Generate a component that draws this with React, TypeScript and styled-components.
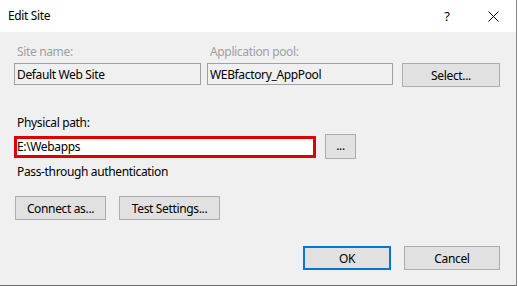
import React from "react";
import styled, { createGlobalStyle, css } from "styled-components";

const Global = createGlobalStyle`
  html, body { margin: 0; padding: 0; background: #ffffff; }
  body { font-family: "Noto Sans", "Liberation Sans", sans-serif; font-size: 12px; letter-spacing: -0.35px; color: #000; }
  * { box-sizing: border-box; }
`;

const Dialog = styled.div`
  width: 517px;
  height: 286px;
  display: flex;
  flex-direction: column;
  border-right: 1px solid #8a8a8a;
  border-bottom: 1px solid #6a6a6a;
  background: #f0f0f0;
`;

const TitleBar = styled.div`
  height: 32px;
  background: #ffffff;
  display: flex;
  align-items: center;
  padding-left: 8px;
  flex-shrink: 0;
`;

const Title = styled.div`
  flex: 1;
  font-size: 12px;
  line-height: 16px;
  padding-bottom: 1px;
`;

const CaptionButton = styled.div`
  width: 46px;
  height: 32px;
  display: flex;
  align-items: center;
  justify-content: center;
  font-size: 13px;
  color: #000;
`;

const Body = styled.div`
  flex: 1;
  padding: 12px 16px 0 14px;
  display: flex;
  flex-direction: column;
`;

const TopRow = styled.div`
  display: flex;
  align-items: flex-end;
`;

const Field = styled.div<{ $w: number; $mr: number }>`
  width: ${(p) => p.$w}px;
  margin-right: ${(p) => p.$mr}px;
  display: flex;
  flex-direction: column;
`;

const Label = styled.div<{ $disabled?: boolean; $indent?: number }>`
  line-height: 15px;
  height: 15px;
  padding-left: ${(p) => p.$indent ?? 3}px;
  color: ${(p) => (p.$disabled ? "#a0a0a0" : "#000")};
  white-space: nowrap;
`;

const TextBox = styled.div<{ $disabled?: boolean }>`
  height: 22px;
  margin-top: 4px;
  border: 1px solid ${(p) => (p.$disabled ? "#a0a0a0" : "#7a7a7a")};
  background: ${(p) => (p.$disabled ? "#f0f0f0" : "#fff")};
  display: flex;
  align-items: center;
  padding-left: 2px;
  white-space: nowrap;
`;

const Button = styled.div<{ $w: number; $default?: boolean }>`
  width: ${(p) => p.$w}px;
  height: 24px;
  background: #e1e1e1;
  border: 1px solid #adadad;
  display: flex;
  align-items: center;
  justify-content: center;
  white-space: nowrap;
  ${(p) =>
    p.$default &&
    css`
      border: 2px solid #0078d7;
    `}
`;

const SelectButton = styled(Button)`
  margin-bottom: -2px;
`;

const PathSection = styled.div`
  margin-top: 30px;
  display: flex;
  flex-direction: column;
`;

const PathRow = styled.div`
  display: flex;
  align-items: center;
  margin-top: 4px;
`;

const RedBox = styled.div`
  width: 302px;
  height: 22px;
  border: 3px solid #e00000;
  background: #fff;
  display: flex;
  align-items: center;
  padding-left: 0px;
  margin-right: 9px;
`;

const BrowseButton = styled(Button)`
  height: 25px;
  padding-bottom: 3px;
`;

const AuthLabel = styled(Label)`
  margin-top: 5px;
`;

const ActionRow = styled.div`
  display: flex;
  gap: 13px;
  margin-top: 17px;
  padding-left: 1px;
`;

const Footer = styled.div`
  display: flex;
  justify-content: flex-end;
  gap: 13px;
  margin-top: 26px;
`;

export default function App() {
  return (
    <>
      <Global />
      <Dialog>
        <TitleBar>
          <Title>Edit Site</Title>
          <CaptionButton>?</CaptionButton>
          <CaptionButton>
            <svg width="11" height="11" viewBox="0 0 11 11">
              <path d="M0.5 0.5 L10.5 10.5 M10.5 0.5 L0.5 10.5" stroke="#000" strokeWidth="1" fill="none" />
            </svg>
          </CaptionButton>
        </TitleBar>
        <Body>
          <TopRow>
            <Field $w={187} $mr={6}>
              <Label $disabled>Site name:</Label>
              <TextBox $disabled>Default Web Site</TextBox>
            </Field>
            <Field $w={186} $mr={9}>
              <Label $disabled>Application pool:</Label>
              <TextBox $disabled>WEBfactory_AppPool</TextBox>
            </Field>
            <SelectButton $w={98}>Select...</SelectButton>
          </TopRow>
          <PathSection>
            <Label>Physical path:</Label>
            <PathRow>
              <RedBox>E:\Webapps</RedBox>
              <BrowseButton $w={31}>...</BrowseButton>
            </PathRow>
            <AuthLabel>Pass-through authentication</AuthLabel>
          </PathSection>
          <ActionRow>
            <Button $w={91}>Connect as...</Button>
            <Button $w={101}>Test Settings...</Button>
          </ActionRow>
          <Footer>
            <Button $w={88} $default>OK</Button>
            <Button $w={96}>Cancel</Button>
          </Footer>
        </Body>
      </Dialog>
    </>
  );
}
